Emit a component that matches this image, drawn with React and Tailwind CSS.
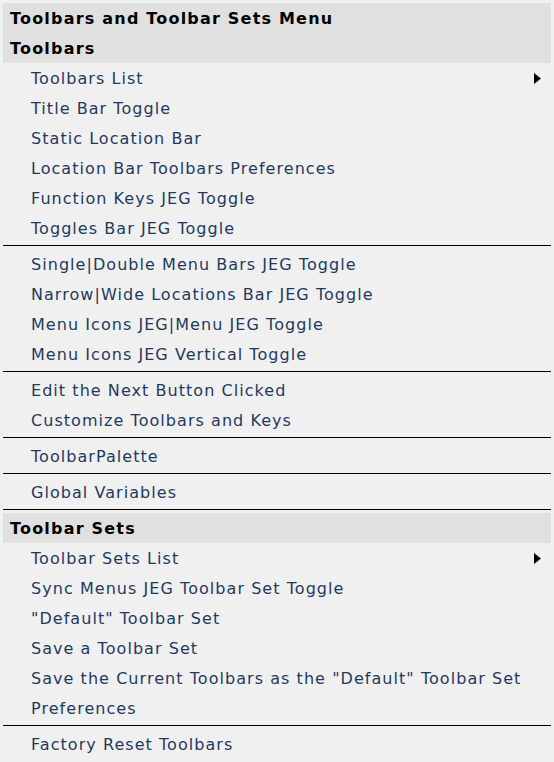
import React from "react";

const Arrow = () => (
  <svg width="7" height="11" viewBox="0 0 7 11" className="shrink-0">
    <path d="M0 0 L7 5.5 L0 11 Z" fill="#000" />
  </svg>
);

const Item = ({ children, arrow }) => (
  <div className="flex items-start justify-between pl-[28px] pr-[10px] leading-[30px] tracking-[1.05px] text-[#1f3a5f]">
    <span className="translate-y-px">{children}</span>
    {arrow && (
      <span className="h-[30px] flex items-center">
        <Arrow />
      </span>
    )}
  </div>
);

const Sep = () => <div className="mt-[2px] mb-[3px] h-px bg-black" />;

const Header = ({ children }) => (
  <div className="pl-[7px] leading-[30px] font-bold tracking-[1.2px] text-black">
    <span className="inline-block translate-y-px">{children}</span>
  </div>
);

export default function App() {
  return (
    <div
      className="w-[554px] h-[762px] bg-[#f0f0f0] p-[3px] text-[16px] overflow-hidden"
      style={{ fontFamily: '"DejaVu Sans", Verdana, sans-serif' }}
    >
      <div className="bg-[#e0e0e0]">
        <Header>Toolbars and Toolbar Sets Menu</Header>
        <Header>Toolbars</Header>
      </div>
      <Item arrow>Toolbars List</Item>
      <Item>Title Bar Toggle</Item>
      <Item>Static Location Bar</Item>
      <Item>Location Bar Toolbars Preferences</Item>
      <Item>Function Keys JEG Toggle</Item>
      <Item>Toggles Bar JEG Toggle</Item>
      <Sep />
      <Item>Single|Double Menu Bars JEG Toggle</Item>
      <Item>Narrow|Wide Locations Bar JEG Toggle</Item>
      <Item>Menu Icons JEG|Menu JEG Toggle</Item>
      <Item>Menu Icons JEG Vertical Toggle</Item>
      <Sep />
      <Item>Edit the Next Button Clicked</Item>
      <Item>Customize Toolbars and Keys</Item>
      <Sep />
      <Item>ToolbarPalette</Item>
      <Sep />
      <Item>Global Variables</Item>
      <Sep />
      <div className="bg-[#e0e0e0]">
        <Header>Toolbar Sets</Header>
      </div>
      <Item arrow>Toolbar Sets List</Item>
      <Item>Sync Menus JEG Toolbar Set Toggle</Item>
      <Item>"Default" Toolbar Set</Item>
      <Item>Save a Toolbar Set</Item>
      <Item>Save the Current Toolbars as the "Default" Toolbar Set Preferences</Item>
      <Sep />
      <Item>Factory Reset Toolbars</Item>
    </div>
  );
}
